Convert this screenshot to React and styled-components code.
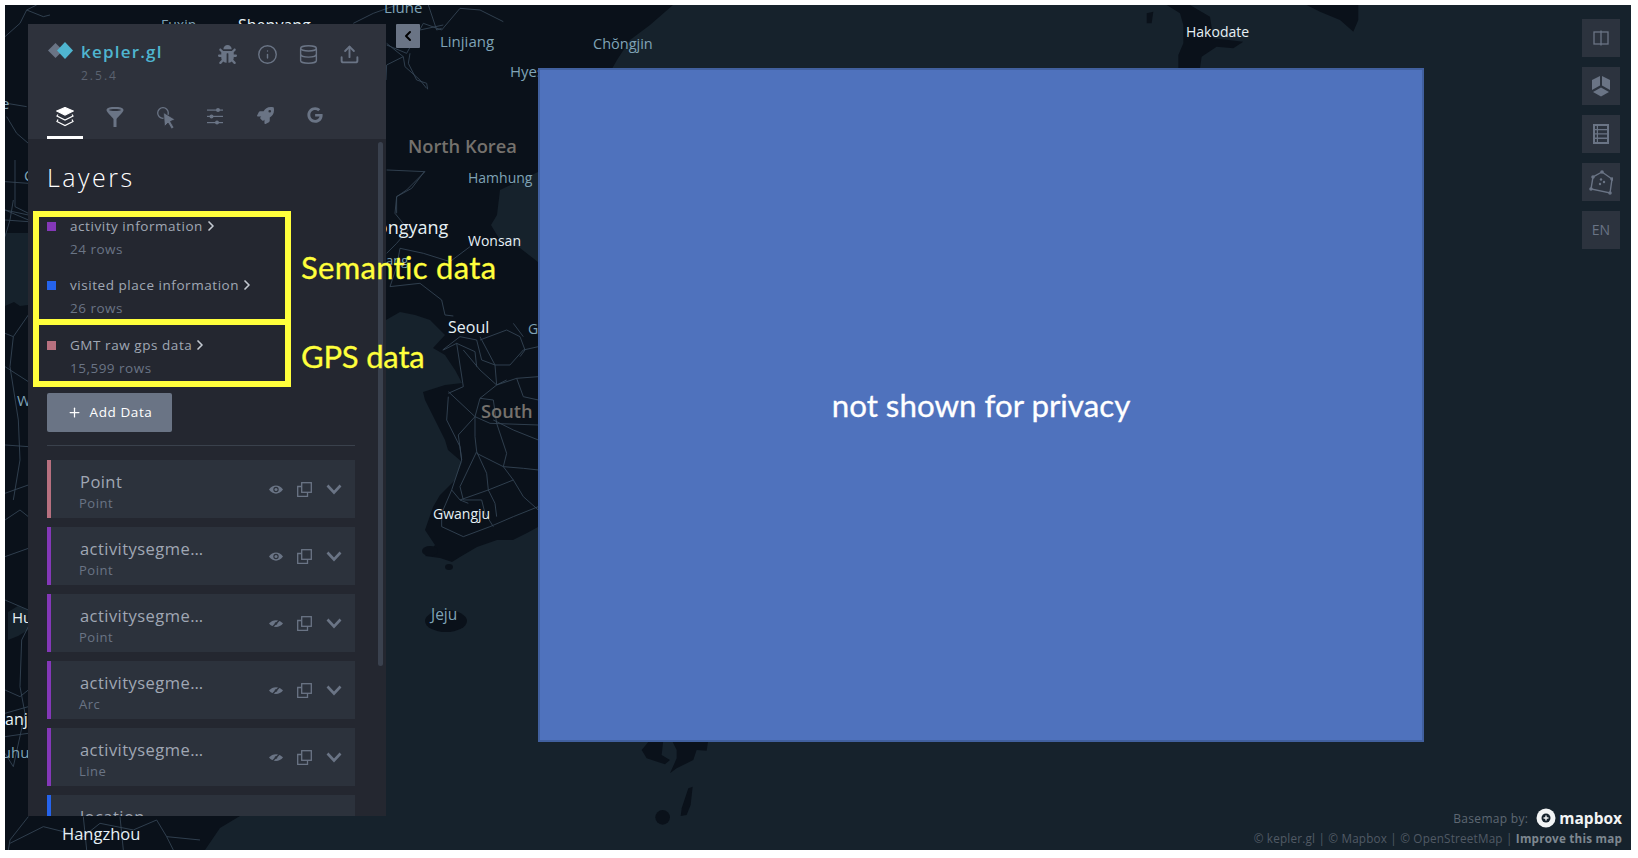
import React from "react";
import styled, { createGlobalStyle } from "styled-components";
import { Info, Database, Upload, ChevronLeft, ChevronRight, Plus } from "lucide-react";
import { FaBug, FaRocket, FaGoogle } from "react-icons/fa";

const UI_FONT = `"Open Sans", "Liberation Sans", sans-serif`;
const SLIDE_FONT = `Lato, "Open Sans", sans-serif`;

const GlobalStyle = createGlobalStyle`
  html, body { margin: 0; padding: 0; background: #fff; }
  body { font-family: ${UI_FONT}; }
`;

const Page = styled.div`
  width: 1638px;
  height: 858px;
  padding: 5px 7px 8px 5px;
  box-sizing: border-box;
  background: #fff;
`;

// the map canvas, every panel sits over it
const Map = styled.div`
  position: relative;
  display: flex;
  align-items: flex-start;
  width: 100%;
  height: 100%;
  box-sizing: border-box;
  padding: 14px 11px 34px 23px;
  overflow: hidden;
  background: #16222c;
`;

const MapDrawing = styled.svg`
  position: absolute;
  left: 0;
  top: 0;
`;

const TONES = {
  city: "color: #7fa3b6; font-weight: 400;",
  major: "color: #e6f0f5; font-weight: 500;",
  country: "color: #75716d; font-weight: 600;",
};

const MapLabel = styled.span`
  position: absolute;
  left: ${(p) => p.$x - 5}px;
  top: ${(p) => p.$y - 15}px;
  line-height: 20px;
  font-size: ${(p) => p.$size || 14}px;
  white-space: nowrap;
  ${(p) => TONES[p.$tone || "city"]}
`;

const Panel = styled.div`
  position: relative;
  flex: none;
  display: flex;
  flex-direction: column;
  width: 358px;
  height: 792px;
  margin-top: 5px;
  overflow: hidden;
  background: #242730;
`;

const PanelHeader = styled.div`
  flex: none;
  height: 115px;
  box-sizing: border-box;
  padding: 19px 19px 0;
  background: #2e323c;
`;

const HeaderTop = styled.div`
  display: flex;
  justify-content: space-between;
  height: 50px;
`;

const Brand = styled.div`
  display: flex;
  align-items: flex-start;
  gap: 8px;
  margin-top: -1px;
  padding-left: 1px;
`;

const BrandText = styled.div`
  display: flex;
  flex-direction: column;
`;

const BrandName = styled.div`
  color: #4fb5d0;
  font-size: 17px;
  font-weight: 600;
  line-height: 20px;
  letter-spacing: 1.2px;
`;

const BrandVersion = styled.div`
  margin-top: 6px;
  color: #5b6270;
  font-size: 12px;
  line-height: 16px;
  letter-spacing: 2px;
`;

const HeaderActions = styled.div`
  display: flex;
  align-items: center;
  gap: 20px;
  height: 22px;
  margin-right: 7px;
  color: #6a7485;
`;

const Tabs = styled.div`
  display: flex;
  gap: 14px;
  margin-top: 11px;
`;

const Tab = styled.div`
  display: flex;
  justify-content: center;
  align-items: flex-start;
  width: 36px;
  height: 35px;
  box-sizing: border-box;
  padding-top: 3px;
  color: ${(p) => (p.$active ? "#fff" : "#6a7485")};
  border-bottom: 3px solid ${(p) => (p.$active ? "#fff" : "transparent")};
`;

const PanelBody = styled.div`
  position: relative;
  flex: 1;
  min-height: 0;
  padding: 0 31px 0 19px;
  overflow: hidden;
`;

const Scrollbar = styled.div`
  position: absolute;
  top: 3px;
  right: 3px;
  width: 5px;
  height: 524px;
  border-radius: 3px;
  background: #3a414e;
`;

const PanelTitle = styled.div`
  height: 72px;
  padding-top: 21px;
  box-sizing: border-box;
  color: #fff;
  font-size: 25px;
  font-weight: 300;
  line-height: 34px;
  letter-spacing: 2.5px;
`;

const MarkedGroup = styled.div`
  width: 258px;
  height: ${(p) => p.$height}px;
  margin: ${(p) => (p.$overlap ? "-6px" : "0")} 0 0 -14px;
  padding: ${(p) => p.$pad}px 0 0 8px;
  box-sizing: border-box;
  border: 6px solid #ffff3c;
`;

const DatasetRow = styled.div`
  height: 41px;
  margin-bottom: 19px;
`;

const DatasetName = styled.div`
  display: flex;
  align-items: center;
  height: 18px;
  margin-top: -1px;
  color: #a0a7b4;
  font-size: 13.5px;
  letter-spacing: 0.55px;
  white-space: nowrap;
`;

const Swatch = styled.span`
  flex: none;
  width: 9px;
  height: 9px;
  margin-right: 14px;
  background: ${(p) => p.$color};
`;

const DatasetCount = styled.div`
  height: 18px;
  margin: 5px 0 0 23px;
  color: #6a7485;
  font-size: 13.5px;
  line-height: 18px;
  letter-spacing: 0.5px;
`;

const AddButton = styled.div`
  display: flex;
  align-items: center;
  justify-content: center;
  gap: 8px;
  width: 125px;
  height: 39px;
  margin-top: 6px;
  padding-bottom: 1px;
  box-sizing: border-box;
  border-radius: 2px;
  background: #6a7485;
  color: #fff;
  font-size: 13.5px;
  font-weight: 500;
  letter-spacing: 0.6px;
`;

const Divider = styled.div`
  height: 1px;
  margin: 13px 0 14px;
  background: #3a414c;
`;

const LayerCard = styled.div`
  display: flex;
  justify-content: space-between;
  align-items: center;
  flex: none;
  height: 58px;
  margin-bottom: 9px;
  padding: 0 13px 0 28px;
  border-left: 4px solid ${(p) => p.$color};
  background: #2c323c;
`;

const LayerText = styled.div`
  display: flex;
  flex-direction: column;
  padding-top: 4px;
`;

const LayerName = styled.div`
  margin-left: 1px;
  color: #a0a7b4;
  font-size: 16.5px;
  line-height: 22px;
  letter-spacing: 0.45px;
  white-space: nowrap;
`;

const LayerType = styled.div`
  margin-top: 2px;
  color: #6a7485;
  font-size: 13px;
  line-height: 16px;
  letter-spacing: 0.5px;
`;

const LayerActions = styled.div`
  display: flex;
  align-items: center;
  gap: 14px;
  color: #6a7485;
`;

const CollapseButton = styled.div`
  position: relative;
  flex: none;
  display: flex;
  align-items: center;
  justify-content: center;
  width: 24px;
  height: 24px;
  margin: 5px 0 0 10px;
  border-radius: 1px;
  background: #6a7485;
  color: #000;
`;

const Redaction = styled.div`
  position: relative;
  flex: none;
  display: flex;
  align-items: center;
  justify-content: center;
  width: 886px;
  height: 674px;
  margin: 49px 0 0 118px;
  box-sizing: border-box;
  border: 2px solid #41609f;
  background: #4f72bd;
  color: #fff;
  font-family: ${SLIDE_FONT};
  font-size: 31.3px;
  -webkit-text-stroke: 0.3px #fff;
`;

const SideButtons = styled.div`
  position: relative;
  flex: none;
  display: flex;
  flex-direction: column;
  gap: 10px;
  margin-left: 158px;
`;

const SideButton = styled.div`
  display: flex;
  align-items: center;
  justify-content: center;
  width: 38px;
  height: 38px;
  box-sizing: border-box;
  padding-bottom: ${(p) => (p.$text ? "2px" : "0")};
  background: #2c333e;
  color: #6a7485;
  font-size: 14px;
`;

const Credits = styled.div`
  position: absolute;
  right: 9px;
  bottom: 4px;
  display: flex;
  flex-direction: column;
  align-items: flex-end;
  gap: 1px;
`;

const BasemapLine = styled.div`
  display: flex;
  align-items: center;
  gap: 8px;
  color: #5e6873;
  font-size: 12px;
  letter-spacing: 0.3px;
`;

const MapboxMark = styled.span`
  display: flex;
  align-items: center;
  gap: 3px;
  color: #f2f4f5;
  font-size: 15.5px;
  font-weight: 700;
  letter-spacing: 0;
`;

const Attribution = styled.div`
  color: #515a65;
  font-size: 11.7px;
  line-height: 16px;
  letter-spacing: 0.2px;
  b { color: #7d8790; font-weight: 700; }
`;

const Annotation = styled.span`
  position: absolute;
  left: 296px;
  top: ${(p) => p.$top}px;
  color: #ffff3c;
  font-family: ${SLIDE_FONT};
  font-size: 31px;
  letter-spacing: ${(p) => p.$spacing}px;
  line-height: 36px;
  white-space: nowrap;
  -webkit-text-stroke: 0.3px #ffff3c;
`;

const LAYERS = [
  { name: "Point", type: "Point", color: "#b7707f", seen: true },
  { name: "activitysegme…", type: "Point", color: "#8438b8", seen: true },
  { name: "activitysegme…", type: "Point", color: "#8438b8" },
  { name: "activitysegme…", type: "Arc", color: "#8438b8" },
  { name: "activitysegme…", type: "Line", color: "#8438b8" },
  { name: "location", type: "Point", color: "#2563eb" },
];

const LABELS = [
  { text: "Liune", x: 384, y: 7, size: 15 },
  { text: "Fuxin", x: 161, y: 25 },
  { text: "Shenyang", x: 238, y: 25, tone: "major", size: 16 },
  { text: "Linjiang", x: 440, y: 41, size: 15 },
  { text: "Chŏngjin", x: 593, y: 44, size: 14.5 },
  { text: "Hyesan", x: 510, y: 71, size: 15 },
  { text: "North Korea", x: 408, y: 146, tone: "country", size: 18.3 },
  { text: "Hamhung", x: 468, y: 178 },
  { text: "Pyongyang", x: 357, y: 227, tone: "major", size: 18 },
  { text: "Wonsan", x: 468, y: 241, tone: "major", size: 14 },
  { text: "ang", x: 386, y: 260, size: 13 },
  { text: "Seoul", x: 448, y: 327, tone: "major", size: 16 },
  { text: "Gangneung", x: 528, y: 329 },
  { text: "South Korea", x: 481, y: 411, tone: "country", size: 18.3 },
  { text: "Gwangju", x: 433, y: 514, tone: "major", size: 14 },
  { text: "Jeju", x: 431, y: 614, size: 15.5 },
  { text: "Hakodate", x: 1186, y: 32, tone: "major", size: 14 },
  { text: "Hangzhou", x: 62, y: 834, tone: "major", size: 16.5 },
  { text: "Weifang", x: 17, y: 400, size: 15 },
  { text: "Huai'an", x: 12, y: 617, tone: "major", size: 15 },
  { text: "Nanjing", x: -7, y: 719, tone: "major", size: 16 },
  { text: "Wuhu", x: -12, y: 752, size: 15 },
  { text: "Chifeng", x: 24, y: 175, size: 15 },
  { text: "e", x: 1, y: 103, size: 15 },
];

// map shapes are written in the coordinates of the page
function MapShapes() {
  const land = "#0a111a";
  const road = { fill: "none", stroke: "#354656", strokeWidth: 2.6 };
  return (
    <MapDrawing width="1626" height="845" viewBox="5 5 1626 845">
      <path
        fill={land}
        d="M5 5H673L650 25L630 40L617 60L600 90L538 172L500 190L497 215L491 225L500 240L520 248L538 262V527L527 533L513 540L497 540L477 547L460 557L452 562L440 558L425 556L435 545L425 530L433 507L440 495L455 480L462 462L448 450L445 440L425 400L423 392L445 385L462 383L455 370L445 355L433 348L445 335L430 320L415 315L400 312L386 320L300 600L300 816L240 816L220 828L205 850H5Z"
      />
      <path fill="#16222c" d="M5 233H28V305L20 306L14 302L5 306ZM8 612L18 606L28 610V630L18 636L8 640Z" />
      <ellipse cx="446" cy="621" rx="21" ry="11" fill={land} />
      <ellipse cx="430" cy="551" rx="8" ry="5" fill={land} />
      <ellipse cx="449" cy="567" rx="4" ry="3" fill={land} />
      <g transform="translate(1100 0) scale(0.3333)" fill={land}>
        <path d="M200 15L240 40L250 75L250 130L235 165L235 205H300L305 170L350 140L400 145L430 125L340 115L330 50L270 15Z" />
        <path d="M620 15H775V60L760 95L720 60L660 35Z" />
        <path d="M140 40L160 35L155 70L140 70Z" />
      </g>
      <g transform="translate(540 730) scale(0.3333)" fill={land}>
        <path d="M305 60L330 30H370L365 75L390 90L375 103L320 85Z" />
        <path d="M395 30H505L500 62L470 60L460 90L410 115L390 130L410 85L410 60Z" />
        <path d="M445 175L458 170L452 225L440 255L422 258L425 235Z" />
        <circle cx="368" cy="262" r="22" />
      </g>
      {/* roads, top left */}
      <g transform="scale(0.3333)" {...road}>
        <path d="M15 110L60 70L80 30L110 15" />
        <path d="M80 30L130 50L150 45" />
        <path d="M1060 70L1120 40L1190 15" />
        <path d="M1160 130L1210 170L1215 200L1260 240L1280 265" />
        <path d="M1210 170L1160 195L1158 240" />
        <path d="M1210 120L1260 90L1330 75" />
        <path d="M1160 510L1275 515L1220 570L1190 590L1190 640" />
        <path d="M20 310L80 320" />
        <path d="M20 350L50 400L85 430" />
        <path d="M15 545L85 550" />
        <path d="M45 480L45 620L85 640" />
        <path d="M15 630L85 660" />
      </g>
      {/* roads, north of the peninsula */}
      <g transform="translate(380 0) scale(0.3333)" {...road}>
        <path d="M20 135L80 160L130 70L185 90L240 25L300 30L370 65" />
        <path d="M145 15L170 90L185 85" />
        <path d="M90 160L85 190L110 240L140 250L143 268" />
        <path d="M133 515L95 565L50 590L45 640L85 690L50 730L20 760" />
        <path d="M60 745L130 760L210 785L270 740" />
        <path d="M60 745L50 800L30 860L120 850L185 900" />
      </g>
      {/* roads, south of the peninsula */}
      <g transform="translate(380 300) scale(0.3333)" {...road}>
        <path d="M185 0L195 45L220 48" />
        <path d="M188 150L240 110L290 120L305 180L345 195L350 255L300 295L285 350L285 410L290 455L240 560L250 600L305 600L315 640L340 680" />
        <path d="M205 290L200 360L240 440L245 480L215 570L185 640L185 680L250 710L330 680L400 650L475 620" />
        <path d="M205 275L285 350L235 405L245 480" />
        <path d="M230 130L250 260L205 280" />
        <path d="M250 150L300 210L350 255L410 235L475 230" />
        <path d="M300 110L345 195L390 195L430 150L475 140" />
        <path d="M300 120L380 90L420 110L435 150L420 170" />
        <path d="M350 255L380 240M410 235L430 290L475 300" />
        <path d="M300 295L340 300L350 370L380 460L370 500L400 540L430 590L475 630" />
        <path d="M340 360L400 390L475 420" />
        <path d="M285 350L330 370L475 375" />
        <path d="M290 455L320 520L325 570L240 600" />
        <path d="M290 460L370 500L430 505L475 510" />
        <path d="M325 570L400 540" />
        <path d="M215 570L240 600L265 610" />
        <path d="M325 570L345 610L350 650" />
        <path d="M190 150L230 130L285 155L290 200" />
        <path d="M400 70L430 110" />
      </g>
      {/* roads, left edge and bottom */}
      <g transform="translate(0 200) scale(0.3333)" {...road}>
        <path d="M40 0L30 60L15 110" />
        <path d="M15 30L85 45" />
        <path d="M15 60L85 65" />
        <path d="M15 400L40 410L85 345" />
        <path d="M40 410L30 500L55 660L60 780L40 900" />
        <path d="M15 500L85 545" />
        <path d="M15 735L85 740" />
        <path d="M15 880L85 855" />
      </g>
      <g transform="translate(0 500) scale(0.3333)" {...road}>
        <path d="M15 60L60 30L85 50" />
        <path d="M15 170L85 145" />
        <path d="M15 300L85 330" />
        <path d="M85 380L65 420L60 560L75 640L40 800L15 760" />
        <path d="M15 570L60 590L85 570" />
        <path d="M15 640L85 620" />
        <path d="M15 710L85 700" />
      </g>
      <g transform="translate(0 640) scale(0.3333)" {...road}>
        <path d="M85 530L30 600L25 630" />
        <path d="M30 610L130 560L250 590L300 550L400 570L470 540L500 590L600 600" />
        <path d="M250 530L260 630M360 530L370 630M500 590L520 630" />
      </g>
    </MapDrawing>
  );
}

function LogoMark() {
  return (
    <svg width="25" height="17" viewBox="0 0 25 17">
      <path d="M7.5 1L15 8.5L7.5 16L0 8.5Z" fill="#6a7485" />
      <path d="M17 0L25 8.5L17 17L9 8.5Z" fill="#4fb5d0" />
    </svg>
  );
}

function LayersIcon() {
  return (
    <svg width="18" height="20" viewBox="0 0 18 20" fill="none" stroke="currentColor" strokeWidth="1.2">
      <path d="M9 0.5L17 4L9 8L1 4Z" fill="currentColor" />
      <path d="M2 7.5L1 9L9 13L17 9L16 7.5" />
      <path d="M2 12.5L1 14.5L9 18.5L17 14.5L16 12.5" />
    </svg>
  );
}

function FilterIcon() {
  return (
    <svg width="18" height="20" viewBox="0 0 18 20">
      <path
        fill="currentColor"
        fillRule="evenodd"
        d="M0.5 3C0.5 0.5 5 0 9 0S17.5 0.5 17.5 3C17.5 5 12 10 10.5 12V20H7.5V12C6 10 0.5 5 0.5 3ZM3 3C4 4.3 14 4.3 15 3C14 1.7 4 1.7 3 3Z"
      />
    </svg>
  );
}

function BrushIcon() {
  return (
    <svg width="20" height="22" viewBox="-2 0 20 22" fill="none" stroke="currentColor">
      <circle cx="6" cy="6" r="5.3" strokeWidth="1.3" />
      <path d="M6.5 5.5L18 12.5L13.5 14.5L17 20.5L14.5 22L11 16L7.5 19.5Z" fill="currentColor" stroke="#2e323c" strokeWidth="0.8" />
    </svg>
  );
}

function SlidersIcon() {
  return (
    <svg width="16" height="18" viewBox="0 0 16 18" fill="currentColor">
      <rect y="2.5" width="16" height="1.2" />
      <rect y="8.8" width="16" height="1.2" />
      <rect y="15" width="16" height="1.2" />
      <circle cx="11" cy="3" r="2" />
      <circle cx="4.5" cy="9.4" r="2" />
      <circle cx="10" cy="15.6" r="2" />
    </svg>
  );
}

function EyeIcon({ seen }) {
  if (seen) {
    return (
      <svg width="14" height="11" viewBox="0 0 14 11">
        <path
          fill="currentColor"
          fillRule="evenodd"
          d="M0 5.5C3.5 0 10.5 0 14 5.5C10.5 11 3.5 11 0 5.5ZM7 2.8A2.7 2.7 0 1 0 7 8.2A2.7 2.7 0 1 0 7 2.8Z"
        />
        <circle cx="7" cy="5.5" r="1.5" fill="currentColor" />
      </svg>
    );
  }
  return (
    <svg width="14" height="11" viewBox="0 0 14 11">
      <path fill="currentColor" d="M0 5.5C3.5 1 10.5 1 14 5.5C10.5 10 3.5 10 0 5.5Z" />
      <path d="M3 9.5L11 1.5" stroke="#2c323c" strokeWidth="1.5" />
      <circle cx="7" cy="5.5" r="1.3" fill="#2c323c" />
    </svg>
  );
}

function CopyIcon() {
  return (
    <svg width="15" height="15" viewBox="0 0 15 15" fill="none" stroke="currentColor" strokeWidth="1.3">
      <rect x="4.7" y="0.7" width="9.6" height="9.6" />
      <path d="M4.7 4.5H0.7V14.3H10.5V10.3" />
    </svg>
  );
}

function ExpandIcon() {
  return (
    <svg width="16" height="11" viewBox="0 0 16 11" fill="none" stroke="currentColor" strokeWidth="2.6">
      <path d="M1.5 1.5L8 8.5L14.5 1.5" />
    </svg>
  );
}

function SplitIcon() {
  return (
    <svg width="16" height="16" viewBox="0 0 16 16" fill="none" stroke="currentColor" strokeWidth="1.3">
      <rect x="1" y="2" width="14" height="12" />
      <path d="M8 0.5V15.5" />
    </svg>
  );
}

function CubeIcon() {
  return (
    <svg width="20" height="22" viewBox="0 0 20 22" fill="currentColor">
      <path d="M9 1L1 5V15L9 10.5Z" />
      <path d="M11 1L19 5V15L11 10.5Z" />
      <path d="M10 12.5L2 17L10 21.5L18 17Z" />
    </svg>
  );
}

function TableIcon() {
  return (
    <svg width="16" height="20" viewBox="0 0 16 20" fill="currentColor">
      <path
        fillRule="evenodd"
        d="M0 0H16V20H0ZM5 2H14V5H5ZM5 6.3H14V9.3H5ZM5 10.6H14V13.6H5ZM5 15H14V18H5ZM2 2H3.8V5H2ZM2 6.3H3.8V9.3H2ZM2 10.6H3.8V13.6H2ZM2 15H3.8V18H2Z"
      />
    </svg>
  );
}

function PolygonIcon() {
  return (
    <svg width="24" height="25" viewBox="0 0 24 25" fill="none" stroke="currentColor" strokeWidth="1.4">
      <path d="M13 2L23 9L21 23L2 19L4 7Z" />
      <g fill="currentColor" stroke="none">
        <circle cx="13" cy="2" r="1.8" />
        <circle cx="23" cy="9" r="1.8" />
        <circle cx="21" cy="23" r="1.8" />
        <circle cx="2" cy="19" r="1.8" />
        <circle cx="4" cy="7" r="1.8" />
        <circle cx="12" cy="9.5" r="1.2" />
        <circle cx="15" cy="12" r="1.2" />
        <circle cx="11" cy="14" r="1.2" />
      </g>
    </svg>
  );
}

function MapboxLogo() {
  return (
    <svg width="20" height="20" viewBox="0 0 20 20">
      <circle cx="10" cy="10" r="9.5" fill="#f2f4f5" />
      <circle cx="10" cy="10" r="4.5" fill="#16222c" />
      <path d="M10 7.5V12.5M7.5 10H12.5" stroke="#f2f4f5" strokeWidth="1.4" />
    </svg>
  );
}

function Dataset({ color, name, count }) {
  return (
    <DatasetRow>
      <DatasetName>
        <Swatch $color={color} />
        {name}
        <ChevronRight size={16} strokeWidth={2.5} color="#c4c9d1" />
      </DatasetName>
      <DatasetCount>{count}</DatasetCount>
    </DatasetRow>
  );
}

export default function App() {
  return (
    <Page>
      <GlobalStyle />
      <Map>
        <MapShapes />
        {LABELS.map((l) => (
          <MapLabel key={l.text} $x={l.x} $y={l.y} $size={l.size} $tone={l.tone}>
            {l.text}
          </MapLabel>
        ))}

        <Panel>
          <PanelHeader>
            <HeaderTop>
              <Brand>
                <LogoMark />
                <BrandText>
                  <BrandName>kepler.gl</BrandName>
                  <BrandVersion>2.5.4</BrandVersion>
                </BrandText>
              </Brand>
              <HeaderActions>
                <FaBug size={19} />
                <Info size={21} strokeWidth={1.6} />
                <Database size={21} strokeWidth={1.6} />
                <Upload size={21} strokeWidth={2.2} />
              </HeaderActions>
            </HeaderTop>
            <Tabs>
              <Tab $active><LayersIcon /></Tab>
              <Tab><FilterIcon /></Tab>
              <Tab><BrushIcon /></Tab>
              <Tab><SlidersIcon /></Tab>
              <Tab><FaRocket size={17} /></Tab>
              <Tab><FaGoogle size={16} /></Tab>
            </Tabs>
          </PanelHeader>

          <PanelBody>
            <Scrollbar />
            <PanelTitle>Layers</PanelTitle>
            <MarkedGroup $height={114} $pad={1}>
              <Dataset color="#8438b8" name="activity information" count="24 rows" />
              <Dataset color="#2563eb" name="visited place information" count="26 rows" />
            </MarkedGroup>
            <MarkedGroup $height={68} $pad={12} $overlap>
              <Dataset color="#b7707f" name="GMT raw gps data" count="15,599 rows" />
            </MarkedGroup>
            <AddButton>
              <Plus size={15} strokeWidth={2} />
              Add Data
            </AddButton>
            <Divider />
            {LAYERS.map((layer, i) => (
              <LayerCard key={i} $color={layer.color}>
                <LayerText>
                  <LayerName>{layer.name}</LayerName>
                  <LayerType>{layer.type}</LayerType>
                </LayerText>
                <LayerActions>
                  <EyeIcon seen={layer.seen} />
                  <CopyIcon />
                  <ExpandIcon />
                </LayerActions>
              </LayerCard>
            ))}
          </PanelBody>
        </Panel>

        <CollapseButton>
          <ChevronLeft size={16} strokeWidth={3} />
        </CollapseButton>

        <Redaction>not shown for privacy</Redaction>

        <SideButtons>
          <SideButton><SplitIcon /></SideButton>
          <SideButton><CubeIcon /></SideButton>
          <SideButton><TableIcon /></SideButton>
          <SideButton><PolygonIcon /></SideButton>
          <SideButton $text>EN</SideButton>
        </SideButtons>

        <Credits>
          <BasemapLine>
            Basemap by:
            <MapboxMark>
              <MapboxLogo />
              mapbox
            </MapboxMark>
          </BasemapLine>
          <Attribution>
            © kepler.gl | © Mapbox | © OpenStreetMap | <b>Improve this map</b>
          </Attribution>
        </Credits>

        <Annotation $top={244} $spacing={0.3}>Semantic data</Annotation>
        <Annotation $top={333} $spacing={-0.2}>GPS data</Annotation>
      </Map>
    </Page>
  );
}
